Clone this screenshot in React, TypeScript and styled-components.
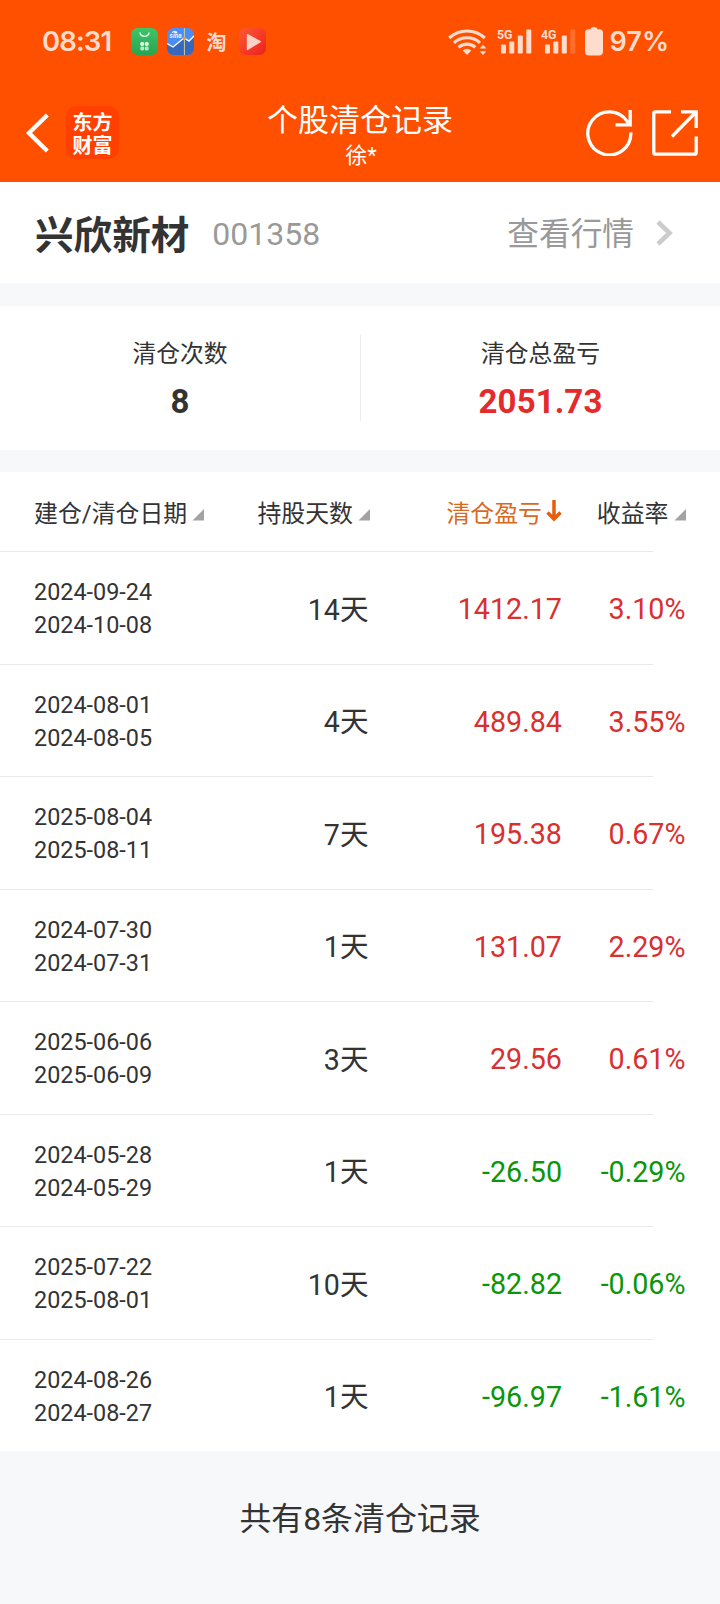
import React from "react";
import styled, { createGlobalStyle } from "styled-components";

const GlobalStyle = createGlobalStyle`
  * { box-sizing: border-box; }
  body {
    margin: 0;
    background: #f7f8fa;
    color: #333;
    font-family: Roboto, "Noto Sans CJK SC", sans-serif;
  }
`;

const Page = styled.main`
  width: 720px;
  height: 1604px;
  display: flex;
  flex-direction: column;
  overflow: hidden;
`;

const TopArea = styled.header`
  height: 182px;
  background: #ff5000;
  color: #fff;
`;

const StatusBar = styled.div`
  height: 83px;
  padding: 0 51px 0 42px;
  display: flex;
  justify-content: space-between;
  align-items: center;
  color: #ffdccd;
  font-family: Inter, sans-serif;
`;

const StatusGroup = styled.div`
  display: flex;
  align-items: center;
`;

const Clock = styled.span`
  width: 89px;
  padding-bottom: 2px;
  font-size: 27.5px;
  font-weight: 600;
  line-height: 30px;
  letter-spacing: -0.9px;
`;

const AppIcons = styled.div`
  display: flex;
  align-items: center;
  gap: 9px;
`;

const TaoGlyph = styled.span`
  width: 27px;
  text-align: center;
  font: 700 20px/27px "Noto Sans CJK SC", sans-serif;
`;

const SignalIcons = styled.div`
  display: flex;
  align-items: center;
  gap: 9px;
`;

const BatteryText = styled.span`
  margin-left: 7px;
  padding-top: 1px;
  font-size: 27px;
  font-weight: 600;
  line-height: 30px;
`;

const NavBar = styled.nav`
  height: 99px;
  padding: 0 22px 0 24px;
  display: grid;
  grid-template-columns: 111px 1fr 113px;
`;

const NavLeft = styled.div`
  display: flex;
  align-items: center;
  gap: 16px;
`;

const Brand = styled.div`
  width: 53px;
  height: 53px;
  padding: 4px 6px 0 6.5px;
  border-radius: 10px;
  background: #ff4000;
  word-break: break-all;
  font: 700 20px/23px "Noto Sans CJK SC", sans-serif;
`;

const NavTitle = styled.div`
  display: flex;
  flex-direction: column;
  align-items: center;
  padding-top: 18px;
`;

const Title = styled.h1`
  margin: 0;
  font-size: 31px;
  font-weight: 400;
  line-height: 40px;
`;

const Account = styled.span`
  padding-left: 2px;
  font-size: 22px;
  line-height: 30px;
`;

const NavRight = styled.div`
  display: flex;
  align-items: center;
  justify-content: flex-end;
  gap: 19.5px;
`;

const StockBar = styled.section`
  height: 101px;
  padding: 2px 47px 0 35px;
  background: #fff;
  display: flex;
  align-items: center;
`;

const StockName = styled.h2`
  margin: 4px 0 0;
  font-size: 38.6px;
  font-weight: 700;
  line-height: 56px;
`;

const StockCode = styled.span`
  margin-left: 23px;
  font-size: 32px;
  line-height: 40px;
  color: #999;
`;

const QuoteLink = styled.a`
  margin: 2px 0 0 auto;
  display: flex;
  align-items: center;
  gap: 22px;
  font-size: 31.7px;
  line-height: 40px;
  color: #999;
`;

const Chevron = styled.svg`
  margin-top: -4px;
`;

const Summary = styled.section`
  height: 144px;
  margin: 23px 0 22px;
  background: #fff;
  display: grid;
  grid-template-columns: 1fr 1fr;
  align-items: center;
`;

const Stat = styled.div<{ $divided?: boolean }>`
  height: 86px;
  padding-top: 1px;
  display: flex;
  flex-direction: column;
  align-items: center;
  border-left: ${(p) => (p.$divided ? "1px solid #ececec" : "0")};
`;

const StatLabel = styled.span`
  font-size: 23.8px;
  line-height: 36px;
`;

const StatValue = styled.strong<{ $color?: string }>`
  margin-top: 10px;
  font-size: 33px;
  line-height: 40px;
  letter-spacing: 0.1px;
  color: ${(p) => p.$color ?? "#333"};
`;

const Table = styled.section`
  background: #fff;
`;

const columns = "170px 164.5px 193.5px 123.5px";

const HeadRow = styled.div`
  height: 79px;
  padding: 4px 0 0 34px;
  display: grid;
  grid-template-columns: ${columns};
  align-items: center;
`;

const HeadCell = styled.div<{ $active?: boolean; $first?: boolean; $shift?: number }>`
  display: flex;
  align-items: center;
  justify-content: ${(p) => (p.$first ? "flex-start" : "flex-end")};
  margin-right: ${(p) => -(p.$shift ?? 0)}px;
  white-space: nowrap;
  font-size: 23.9px;
  line-height: 36px;
  color: ${(p) => (p.$active ? "#d9691e" : "#333")};
`;

const SortMark = styled.svg`
  margin: 2px 0 0 5px;
  flex: none;
`;

const ArrowMark = styled.svg`
  margin: -5px 0 0 4px;
  flex: none;
`;

const Row = styled.div`
  height: 112.5px;
  padding-left: 34px;
  display: grid;
  grid-template-columns: ${columns};
  align-items: center;
  background: linear-gradient(#e9e9e9, #e9e9e9) 0 0 / 653px 1px no-repeat;
`;

const Dates = styled.div`
  font-size: 23.4px;
  line-height: 33px;
  padding-top: 4px;
`;

const Days = styled.div`
  text-align: right;
  font-size: 28.6px;
  line-height: 40px;
  padding-top: 5px;
`;

const Amount = styled(Days)<{ $loss: boolean }>`
  padding-top: 4px;
  font-size: 28.7px;
  color: ${(p) => (p.$loss ? "#0a960a" : "#d9302f")};
`;

const Footer = styled.footer`
  padding-top: 46px;
  text-align: center;
  font-size: 31.9px;
  line-height: 44px;
`;

const records = [
  ["2024-09-24", "2024-10-08", "14天", "1412.17", "3.10%"],
  ["2024-08-01", "2024-08-05", "4天", "489.84", "3.55%"],
  ["2025-08-04", "2025-08-11", "7天", "195.38", "0.67%"],
  ["2024-07-30", "2024-07-31", "1天", "131.07", "2.29%"],
  ["2025-06-06", "2025-06-09", "3天", "29.56", "0.61%"],
  ["2024-05-28", "2024-05-29", "1天", "-26.50", "-0.29%"],
  ["2025-07-22", "2025-08-01", "10天", "-82.82", "-0.06%"],
  ["2024-08-26", "2024-08-27", "1天", "-96.97", "-1.61%"],
];

const MallIcon = () => (
  <svg width="27" height="27" viewBox="0 0 27 27">
    <defs>
      <linearGradient id="mall" x1="0" y1="0" x2="0" y2="1">
        <stop offset="0" stopColor="#3fc468" />
        <stop offset="1" stopColor="#27a551" />
      </linearGradient>
    </defs>
    <rect width="27" height="27" rx="6.5" fill="url(#mall)" />
    <path d="M8.8 4.5a4.8 4.8 0 0 0 9.4 0" fill="none" stroke="#e4f8e9" strokeWidth="1.3" />
    <g fill="#dcf5e2">
      <rect x="9.3" y="14" width="3.9" height="3.9" rx="1.4" />
      <rect x="13.8" y="14" width="3.9" height="3.9" rx="1.4" />
      <rect x="9.3" y="18.6" width="3.9" height="3.9" rx="1.4" opacity=".8" />
      <rect x="13.8" y="18.6" width="3.9" height="3.9" rx="1.4" opacity=".8" />
    </g>
  </svg>
);

const SinaIcon = () => (
  <svg width="27" height="27" viewBox="0 0 27 27">
    <defs>
      <clipPath id="sina">
        <rect width="27" height="27" rx="6.5" />
      </clipPath>
    </defs>
    <g clipPath="url(#sina)">
      <rect width="27" height="27" fill="#4a8df6" />
      <path d="M0 15.5 6 19 17 10l5 3 5-5v19H0z" fill="#3668bd" />
      <path d="M0 15.5 6 19 17 10l5 3 5-5" fill="none" stroke="#fff" strokeWidth="1.4" />
      <path d="M17.4 0v27" stroke="#d3c79c" strokeWidth="1" />
      <circle cx="17.4" cy="10.2" r="1.5" fill="#ff9a1f" />
      <path d="M5 4.8c1.4-2.3 5-2 5 .4M7 5.2c.8-1 2-.6 1.9.4" fill="none" stroke="#eef5ff" strokeWidth="1.1" />
      <text x="2.6" y="10.4" fontSize="6.5" fontWeight="700" fontStyle="italic" fill="#eef5ff" fontFamily="Roboto" textLength="12">sina</text>
    </g>
  </svg>
);

const PlayIcon = () => (
  <svg width="27" height="27" viewBox="0 0 27 27">
    <defs>
      <linearGradient id="play" x1="0" y1="0" x2="1" y2="1">
        <stop offset="0" stopColor="#fb5a30" />
        <stop offset="1" stopColor="#ef2020" />
      </linearGradient>
    </defs>
    <rect width="27" height="27" rx="6.5" fill="url(#play)" />
    <path d="M8.5 6.7 21.3 13.7 8.5 21.4z" fill="#ffd0c6" stroke="#ffd0c6" strokeWidth="1.4" strokeLinejoin="round" />
  </svg>
);

const WifiIcon = () => (
  <svg width="40" height="28" viewBox="0 0 40 28">
    <g fill="none" stroke="#ffdccd" strokeWidth="3.1">
      <path d="M1.2 10a26 26 0 0 1 35.6 0" />
      <path d="M6 14.8a19.2 19.2 0 0 1 26 0" />
      <path d="M10.6 19.3a12.7 12.7 0 0 1 16.8 0" />
    </g>
    <path d="M14.7 22.4a6.6 6.6 0 0 1 8.6 0L19 27z" fill="#ffdccd" />
    <path d="M31.6 20.6 35 16.8l3.4 3.8zM31.6 23.2h6.8L35 27z" fill="#ffdccd" />
  </svg>
);

const SignalSvg = styled.svg`
  overflow: visible;
`;

const SignalIcon = ({ label, weak }: { label: string; weak?: boolean }) => (
  <SignalSvg width="35" height="34" viewBox="0 -3 35 34">
    <text x="0" y="11" fontSize="13.5" fontWeight="700" fontFamily="Roboto" fill="#ffdccd" textLength="15.5" lengthAdjust="spacingAndGlyphs">{label}</text>
    <g fill="#ffdccd">
      <rect x="4" y="16.5" width="5" height="9" rx="1" />
      <rect x="12.3" y="13.5" width="5" height="12" rx="1" />
      <rect x="20.8" y="7.5" width="5" height="18" rx="1" />
      <rect x="29.3" y="1.5" width="5" height="24" rx="1" opacity={weak ? 0.22 : 1} />
    </g>
  </SignalSvg>
);

const BatteryIcon = () => (
  <svg width="18" height="29" viewBox="0 0 18 29">
    <path d="M5.5 2.2Q5.8 0 9 0t3.5 2.2H14.5Q18 2.5 18 6v18.5Q18 28.5 14 28.5H4Q0 28.5 0 24.5V6Q0 2.5 3.5 2.2z" fill="#ffdccd" />
  </svg>
);

const BackIcon = () => (
  <svg width="26" height="42" viewBox="0 0 26 42">
    <path d="M23.3 3 5 21 23.3 39" fill="none" stroke="#fff" strokeWidth="4.3" />
  </svg>
);

const RefreshIcon = () => (
  <svg width="47" height="47" viewBox="0 0 47 47">
    <path d="M44.8 23.3A21.5 21.5 0 1 1 41.3 12.6L43.5 15.5M44.2 1v14.8H29.5" fill="none" stroke="#fff" strokeWidth="3.3" />
  </svg>
);

const ShareIcon = () => (
  <svg width="46" height="46" viewBox="0 0 46 46">
    <path d="M19 1.8H3.5Q1.8 1.8 1.8 3.5V42.500Q1.8 44.2 3.5 44.2H42.5Q44.2 44.2 44.2 42.5V26.5M29 1.8H44.2V18M44 2 20 26.5" fill="none" stroke="#fff" strokeWidth="3.3" />
  </svg>
);

const SortIcon = () => (
  <SortMark width="12" height="12" viewBox="0 0 12 12">
    <path d="M12 0v11.5H.5z" fill="#a3a3a3" />
  </SortMark>
);

export default function App() {
  return (
    <Page>
      <GlobalStyle />
      <TopArea>
        <StatusBar>
          <StatusGroup>
            <Clock>08:31</Clock>
            <AppIcons>
              <MallIcon />
              <SinaIcon />
              <TaoGlyph>淘</TaoGlyph>
              <PlayIcon />
            </AppIcons>
          </StatusGroup>
          <StatusGroup>
            <SignalIcons>
              <WifiIcon />
              <SignalIcon label="5G" />
              <SignalIcon label="4G" weak />
              <BatteryIcon />
            </SignalIcons>
            <BatteryText>97%</BatteryText>
          </StatusGroup>
        </StatusBar>
        <NavBar>
          <NavLeft>
            <BackIcon />
            <Brand>东方财富</Brand>
          </NavLeft>
          <NavTitle>
            <Title>个股清仓记录</Title>
            <Account>徐*</Account>
          </NavTitle>
          <NavRight>
            <RefreshIcon />
            <ShareIcon />
          </NavRight>
        </NavBar>
      </TopArea>

      <StockBar>
        <StockName>兴欣新材</StockName>
        <StockCode>001358</StockCode>
        <QuoteLink>
          查看行情
          <Chevron width="17" height="26" viewBox="0 0 17 26">
            <path d="M2 2 13.5 13 2 24" fill="none" stroke="#ccc" strokeWidth="4.6" />
          </Chevron>
        </QuoteLink>
      </StockBar>

      <Summary>
        <Stat>
          <StatLabel>清仓次数</StatLabel>
          <StatValue>8</StatValue>
        </Stat>
        <Stat $divided>
          <StatLabel>清仓总盈亏</StatLabel>
          <StatValue $color="#e42a2a">2051.73</StatValue>
        </Stat>
      </Summary>

      <Table>
        <HeadRow>
          <HeadCell $first>
            建仓/清仓日期
            <SortIcon />
          </HeadCell>
          <HeadCell $shift={1.5}>
            持股天数
            <SortIcon />
          </HeadCell>
          <HeadCell $active>
            清仓盈亏
            <ArrowMark width="16" height="22" viewBox="0 0 16 22">
              <path d="M8 0v19M1.5 12.5 8 19l6.5-6.5" fill="none" stroke="#e85d0c" strokeWidth="3.5" />
            </ArrowMark>
          </HeadCell>
          <HeadCell>
            收益率
            <SortIcon />
          </HeadCell>
        </HeadRow>
        {records.map(([opened, closed, days, profit, rate]) => (
          <Row key={opened}>
            <Dates>
              <div>{opened}</div>
              <div>{closed}</div>
            </Dates>
            <Days>{days}</Days>
            <Amount $loss={profit.startsWith("-")}>{profit}</Amount>
            <Amount $loss={rate.startsWith("-")}>{rate}</Amount>
          </Row>
        ))}
      </Table>

      <Footer>共有8条清仓记录</Footer>
    </Page>
  );
}
